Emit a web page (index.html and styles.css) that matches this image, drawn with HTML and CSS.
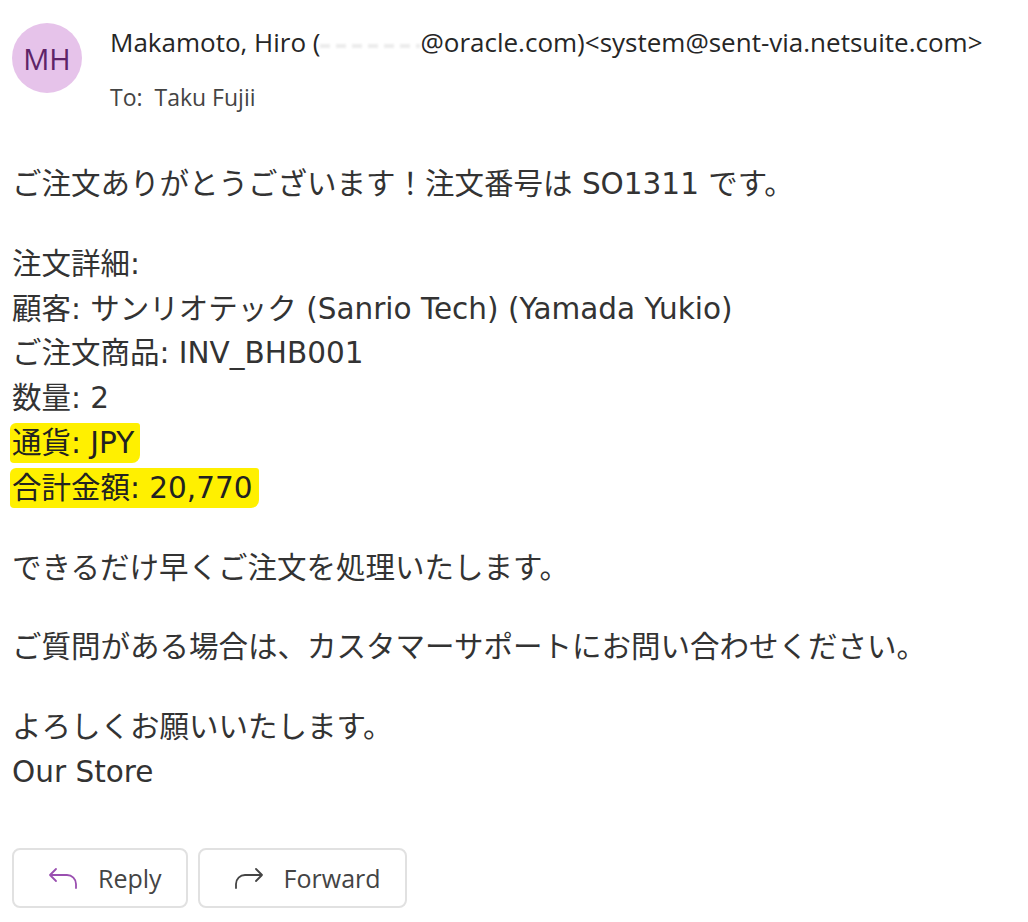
FILE: index.html
```html
<!DOCTYPE html>
<html lang="ja">
<head>
  <meta charset="UTF-8" />
  <title>ご注文ありがとうございます</title>
  <meta name="viewport" content="width=device-width, initial-scale=1.0" />
  <link rel="stylesheet" href="styles.css">
</head>
<body>
  <header class="mail-head">
    <div class="avatar">MH</div>
    <div class="meta">
      <div class="from">Makamoto, Hiro (<span class="masked"></span>@oracle.com)&lt;system@sent-via.netsuite.com&gt;</div>
      <div class="to">To:&nbsp; Taku Fujii</div>
    </div>
  </header>

  <!-- Message body -->
  <main class="mail-body">
    <p>ご注文ありがとうございます！注文番号は SO1311 です。</p>
    <p>
      注文詳細:<br>
      顧客: サンリオテック (Sanrio Tech) (Yamada Yukio)<br>
      ご注文商品: INV_BHB001<br>
      数量: 2<br>
      <span class="mark">通貨: JPY</span><br>
      <span class="mark">合計金額: 20,770</span>
    </p>
    <p>できるだけ早くご注文を処理いたします。</p>
    <p>ご質問がある場合は、カスタマーサポートにお問い合わせください。</p>
    <p>
      よろしくお願いいたします。<br>
      Our Store
    </p>
  </main>

  <div class="actions">
    <button type="button" class="act-btn">
      <svg class="icon reply" viewBox="0 0 30 22" width="30" height="22">
        <path d="M8 2 L2 8 L8 14 M2 8 H19 A9 9 0 0 1 28 17 V21" fill="none" stroke="currentColor" stroke-width="1.8" stroke-linecap="round" stroke-linejoin="round"/>
      </svg>
      Reply
    </button>
    <button type="button" class="act-btn">
      <svg class="icon" viewBox="0 0 30 22" width="30" height="22">
        <path d="M22 2 L28 8 L22 14 M28 8 H11 A9 9 0 0 0 2 17 V21" fill="none" stroke="currentColor" stroke-width="1.8" stroke-linecap="round" stroke-linejoin="round"/>
      </svg>
      Forward
    </button>
  </div>
</body>
</html>
```

FILE: styles.css
```css
body {
  margin: 0;
  padding: 0 12px;
  background: #fff;
  color: #333;
  font-family: "DejaVu Sans", "Noto Sans CJK JP", sans-serif;
}
.mail-head {
  display: flex;
  align-items: flex-start;
  padding-top: 23px;
  gap: 28px;
}
.avatar {
  width: 70px;
  height: 70px;
  border-radius: 50%;
  background: #e6c3ea;
  color: #5e2468;
  font-family: "Open Sans", sans-serif;
  font-size: 29px;
  display: flex;
  align-items: center;
  justify-content: center;
  flex-shrink: 0;
}
.meta {
  font-family: "Open Sans", "Noto Sans CJK JP", sans-serif;
  padding-top: 1px;
}
.from {
  font-size: 26px;
  color: #262626;
  line-height: 36px;
  white-space: nowrap;
}
/* redacted address part, left as a faint smudge */
.masked {
  display: inline-block;
  width: 100px;
  height: 4px;
  margin-bottom: 4px;
  background: repeating-linear-gradient(90deg, #ececec 0 10px, transparent 10px 16px);
  filter: blur(1px);
}
.to {
  font-size: 23px;
  color: #444;
  line-height: 30px;
  margin-top: 22px;
}
.mail-body {
  margin-top: 50px;
  font-size: 29.5px;
  line-height: 44.8px;
}
.mail-body p {
  margin: 0 0 35px;
}
.mark {
  background: #fff000;
  color: #222;
  padding: 3px 6px 3px 2px;
  margin-left: -2px;
  border-radius: 6px 3px 8px 4px;
}
.actions {
  display: flex;
  gap: 10px;
  margin-top: 53px;
}
.act-btn {
  display: flex;
  align-items: center;
  gap: 20px;
  height: 60px;
  padding: 0 24px 0 34px;
  background: #fff;
  border: 2px solid #e1e1e1;
  border-radius: 8px;
  font-family: "Open Sans", sans-serif;
  font-size: 25px;
  color: #444;
}
.icon {
  color: #444;
}
.icon.reply {
  color: #9a4fb0;
}
```
